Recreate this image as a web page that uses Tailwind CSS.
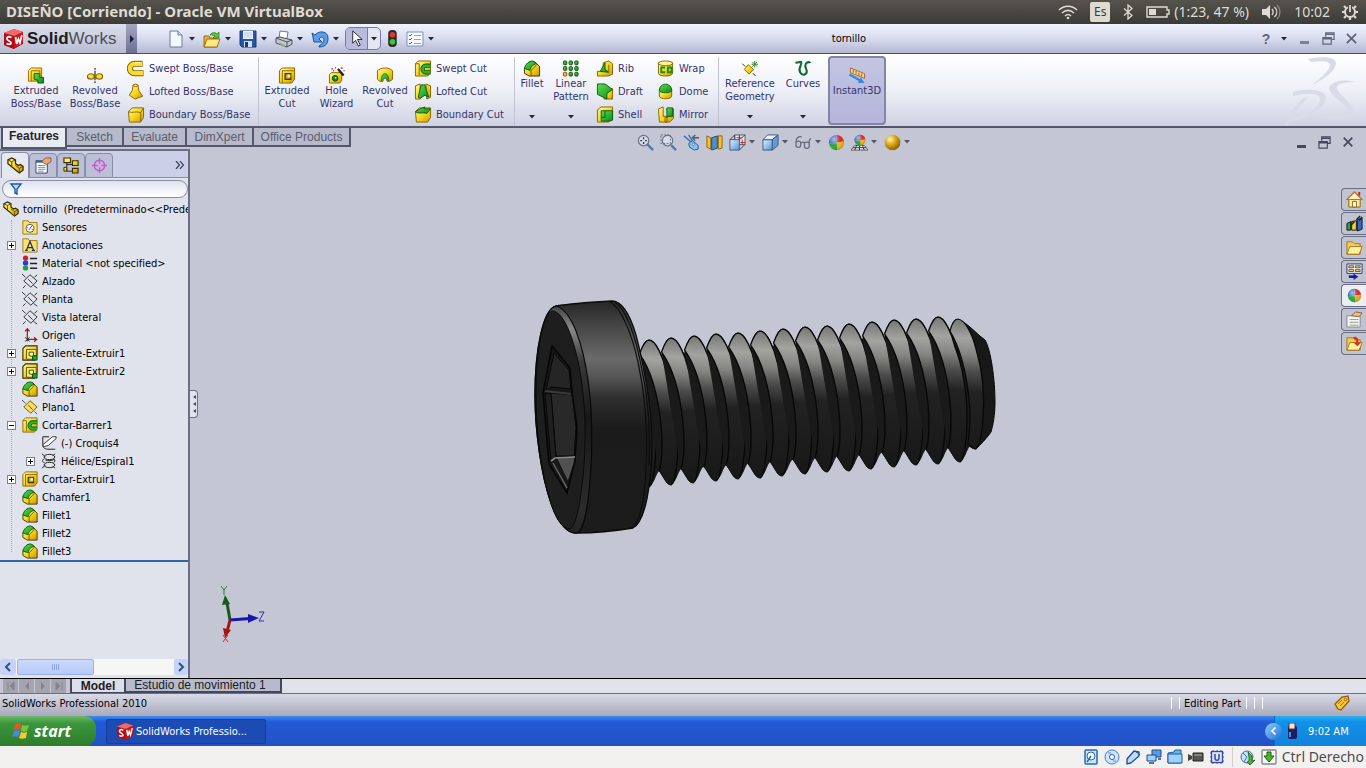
<!DOCTYPE html>
<html lang="es">
<head>
<meta charset="utf-8">
<title>DISEÑO [Corriendo] - Oracle VM VirtualBox</title>
<script src="https://cdn.jsdelivr.net/npm/@tailwindcss/browser@4"></script>
</head>
<body class="flex min-h-screen flex-col overflow-hidden bg-[#c4c7d3] font-['DejaVu_Sans_Condensed','DejaVu_Sans',sans-serif] text-[11px] leading-[13px] text-black">

<svg width="0" height="0" class="absolute" aria-hidden="true">
  <defs>
    <linearGradient id="yel" x1="0" y1="0" x2="1" y2="1"><stop offset="0" stop-color="#fff9a0"/><stop offset=".5" stop-color="#f7d71c"/><stop offset="1" stop-color="#c99700"/></linearGradient>
    <linearGradient id="grn" x1="0" y1="0" x2="1" y2="1"><stop offset="0" stop-color="#5fe04a"/><stop offset="1" stop-color="#0b8a1c"/></linearGradient>
    <linearGradient id="blu" x1="0" y1="0" x2="1" y2="1"><stop offset="0" stop-color="#e2f1fc"/><stop offset="1" stop-color="#4f96d6"/></linearGradient>
    <radialGradient id="gold" cx=".35" cy=".3" r=".8"><stop offset="0" stop-color="#fff8c0"/><stop offset=".4" stop-color="#e0ac1c"/><stop offset="1" stop-color="#7a5200"/></radialGradient>
    <radialGradient id="shine" cx=".35" cy=".3" r=".8"><stop offset="0" stop-color="#fff" stop-opacity=".6"/><stop offset=".5" stop-color="#fff" stop-opacity="0"/><stop offset="1" stop-color="#000" stop-opacity=".3"/></radialGradient>

    <symbol id="dd" viewBox="0 0 6 4"><path d="M0 0h6L3 3.500z" fill="#26263a"/></symbol>
    <symbol id="sw" viewBox="0 0 20 20"><path d="M10 0l9 3v12l-9 5-10-4V4z" fill="#c8141c"/><path d="M0 4l10 3v13L0 16z" fill="#b00d16"/><path d="M10 0l9 3-9 4L0 4z" fill="#f06a6a"/><path d="M7.500 8.500c-3-1.500-5-.5-4.500 1.500s4 2 4 4-3 1.500-4.500.5" fill="none" stroke="#fff" stroke-width="1.800"/><path d="M11.500 8l1.200 7 1.700-5 1.500 4 2-8" fill="none" stroke="#fff" stroke-width="1.700"/></symbol>

    <symbol id="extrude" viewBox="0 0 18 18"><path d="M1 4l3-3h11v10l-3 4H1z" fill="url(#yel)" stroke="#a06c00"/><path d="M4 4h9v9M4 4v11" fill="none" stroke="#a06c00"/><path d="M7 7h6v4h4v6h-6v-3l-4-1z" fill="url(#grn)" stroke="#0a5c12"/></symbol>
    <symbol id="revolve" viewBox="0 0 18 18"><path d="M9 1v2M9 4v10M9 15v2" stroke="#222" stroke-width="1.200"/><ellipse cx="4.500" cy="10" rx="3.500" ry="2.800" fill="#f6dd3a" stroke="#8a6400" stroke-width="1.200"/><ellipse cx="13.500" cy="10" rx="3.500" ry="2.800" fill="#f6dd3a" stroke="#8a6400" stroke-width="1.200"/><path d="M8 10h2" stroke="#8a6400"/></symbol>
    <symbol id="sweep" viewBox="0 0 18 18"><path d="M16 4H7.500a5 5 0 000 10H17" fill="none" stroke="#8a6400" stroke-width="6.500"/><path d="M15.500 4h-8a5 5 0 000 10h9" fill="none" stroke="#f8dc2e" stroke-width="4.500"/><path d="M14 3H8" stroke="#fffbb8"/></symbol>
    <symbol id="loft" viewBox="0 0 18 18"><path d="M6 2h5l1 6 4 6-8 3-6-4 3-5z" fill="url(#yel)" stroke="#8a6400"/><ellipse cx="8.500" cy="2.500" rx="2.500" ry="1.200" fill="#fff9a0" stroke="#8a6400"/></symbol>
    <symbol id="boundary" viewBox="0 0 18 18"><path d="M1 6l4-4h12v10l-3 5H2z" fill="url(#yel)" stroke="#8a6400"/><path d="M1 6c4 2 8-1 13 1l3-5M14 7v9" fill="none" stroke="#8a6400"/></symbol>
    <symbol id="bcut" viewBox="0 0 18 18"><path d="M1 6l4-4h12v10l-3 5H2z" fill="url(#yel)" stroke="#8a6400"/><path d="M1 6l5-3 5-2-1 2h7l-4 5c-4-2-8 1-12-2z" fill="url(#grn)" stroke="#0a5c12"/></symbol>
    <symbol id="excut" viewBox="0 0 18 18"><path d="M1 4l3-3h13v12l-3 4H1z" fill="url(#yel)" stroke="#8a6400"/><path d="M4 4h13M4 4v13" fill="none" stroke="#8a6400"/><path d="M7 7h6v6H7z" fill="#b8a028" stroke="#4a3400" stroke-width="1.300"/><path d="M9.500 8h3v3h-3z" fill="#fff39a"/></symbol>
    <symbol id="hole" viewBox="0 0 18 18"><path d="M1 8l2-2h11v8l-2 3H1z" fill="url(#yel)" stroke="#8a6400"/><circle cx="7" cy="12" r="3" fill="#0f8a20" stroke="#084a10"/><circle cx="7.500" cy="11.500" r="1" fill="#fff39a"/><path d="M10 2l6 7" stroke="#222" stroke-width="2.400"/><path d="M3 2h2M7 1h1M13 1h2M5 4h1M16 4h1" stroke="#c33" stroke-width="1.500"/></symbol>
    <symbol id="revcut" viewBox="0 0 18 18"><path d="M1 4c4-4 12-4 16 0v9c-2 2-4 3-6 2V9H7v6c-2 1-4 0-6-2z" fill="url(#yel)" stroke="#8a6400"/><path d="M5 15c0-4 1-8 4-8s4 4 4 8l-3-3H8z" fill="url(#grn)" stroke="#0a5c12" stroke-width=".7"/></symbol>
    <symbol id="swcut" viewBox="0 0 18 18"><path d="M1 4l3-3h13v12l-3 4H1z" fill="url(#yel)" stroke="#8a6400"/><path d="M1 4h4v12" fill="none" stroke="#8a6400"/><path d="M17 6h-5a3.500 3.500 0 000 7h5" fill="none" stroke="#0a5c12" stroke-width="4.500"/><path d="M17 6h-5a3.500 3.500 0 000 7h5" fill="none" stroke="#27b432" stroke-width="2.600"/></symbol>
    <symbol id="locut" viewBox="0 0 18 18"><path d="M1 3l5-2v16H1zM12 1l5 2v12l-4 2z" fill="url(#yel)" stroke="#8a6400"/><path d="M7 2h4l4 13-4-2-5 3-2-1z" fill="url(#grn)" stroke="#0a5c12"/></symbol>
    <symbol id="fillet" viewBox="0 0 18 18"><path d="M1 9l5-7h6l5 5v10H6l-5-3z" fill="url(#yel)" stroke="#3c2f00"/><path d="M8 17v-6l6-6" fill="none" stroke="#6a5000"/><path d="M1 9c1-5 5-8 9-8l4 3c-4 0-7 4-7 7z" fill="url(#grn)" stroke="#0a5c12"/></symbol>
    <symbol id="pattern" viewBox="0 0 18 18"><g fill="url(#grn)" stroke="#084a10"><rect x="1" y="1" width="3.500" height="4" rx="1"/><rect x="7" y="1" width="3.500" height="4" rx="1"/><rect x="13" y="1" width="3.500" height="4" rx="1"/><rect x="1" y="7" width="3.500" height="4" rx="1"/><rect x="7" y="7" width="3.500" height="4" rx="1"/><rect x="13" y="7" width="3.500" height="4" rx="1"/><rect x="7" y="13" width="3.500" height="4" rx="1"/><rect x="13" y="13" width="3.500" height="4" rx="1"/></g><rect x="1" y="13" width="3.500" height="4" rx="1" fill="#ffb326" stroke="#b03a00"/></symbol>
    <symbol id="rib" viewBox="0 0 18 18"><path d="M1 12h6V3l6-2 4 3v11l-5 2H1z" fill="url(#yel)" stroke="#8a6400"/><path d="M4 12l5-9v7l4 3z" fill="url(#grn)" stroke="#0a5c12"/><path d="M13 5v8" stroke="#8a6400"/></symbol>
    <symbol id="draft" viewBox="0 0 18 18"><path d="M9 6h8v11H8z" fill="url(#yel)" stroke="#8a6400"/><path d="M1 1h8l8 6-6 4v6L1 12z" fill="url(#grn)" stroke="#0a5c12"/></symbol>
    <symbol id="shell" viewBox="0 0 18 18"><path d="M1 4l4-3h12v12l-4 4H1z" fill="url(#yel)" stroke="#8a6400"/><path d="M5 5h12v10l-3 1H5z" fill="url(#grn)" stroke="#0a5c12"/><path d="M9 5v7H5" stroke="#0a5c12" fill="none"/></symbol>
    <symbol id="wrap" viewBox="0 0 18 18"><path d="M1 3v11c0 4 15 4 15 0V3z" fill="url(#yel)" stroke="#8a6400"/><ellipse cx="8.500" cy="3.500" rx="7.500" ry="2.500" fill="#fff39a" stroke="#8a6400"/><path d="M8 8H4v5h4M12 8h3v5h-4V8z" fill="none" stroke="#13911f" stroke-width="2"/></symbol>
    <symbol id="dome" viewBox="0 0 18 18"><path d="M2 7v7c0 3.500 13 3.500 13 0V7z" fill="url(#yel)" stroke="#8a6400"/><path d="M2 8c0-9 13-9 13 0 0 3-13 3-13 0z" fill="url(#grn)" stroke="#0a5c12"/></symbol>
    <symbol id="mirror" viewBox="0 0 18 18"><path d="M1 3l5-2v10h4v6H2z M10 3h7v10l-4 4H8v-5h3z" fill="url(#yel)" stroke="#8a6400"/><path d="M10 2h6v9h-6z" fill="url(#grn)" stroke="#0a5c12"/></symbol>
    <symbol id="refgeo" viewBox="0 0 18 18"><path d="M7 5l6 5-5 5-5-5z" fill="url(#yel)" stroke="#8a6400"/><path d="M1 4l3 3M12 14l3 3" stroke="#222"/><path d="M14 1v7M10.500 4.500h7M11.500 2l5 5M16.500 2l-5 5" stroke="#2d8a2d"/></symbol>
    <symbol id="curves" viewBox="0 0 18 18"><path d="M1 3l6-1c2 3-4 6-1 11 2 4 7 3 7-1 0-3-3-5-1-8s4-1 5-2" fill="none" stroke="#0d6b32" stroke-width="2.200"/></symbol>
    <symbol id="instant" viewBox="0 0 18 18"><path d="M2 1l15 6v5L2 6z" fill="#f7e08a" stroke="#b0603a"/><path d="M5 3v3M8 4v3M11 6v3M14 7v3" stroke="#a04020"/><path d="M1 8l11 6" stroke="#3a86d8" stroke-width="2.500"/><path d="M17 17h-7l3-6z" fill="#3a86d8"/></symbol>
    <symbol id="new" viewBox="0 0 18 18"><path d="M3 1h8l4 4v12H3z" fill="#f4f8ff" stroke="#6a7c98"/><path d="M11 1v4h4" fill="#cfe0f2" stroke="#6a7c98"/></symbol>
    <symbol id="open" viewBox="0 0 18 18"><path d="M1 6h5l1 2h7v9H1z" fill="#e8b53a" stroke="#a06a08"/><path d="M4 9h13l-3 8H1z" fill="#ffe88a" stroke="#a06a08"/><path d="M7 5c2-3 5-3 7-1l2-2v6h-6l2-2c-1-1-3-1-5-1z" fill="#5cc43a" stroke="#2d7a18" stroke-width=".7"/></symbol>
    <symbol id="save" viewBox="0 0 18 18"><path d="M1 1h16v16H3l-2-2z" fill="#2757a8" stroke="#173a7c"/><path d="M4 1h10v8H4z" fill="#f3f7fd"/><path d="M5 3h8M5 5h8M5 7h8" stroke="#b4c4e0"/><path d="M5 11h8v6H5z" fill="#d5dff0"/><path d="M6 12h3v5H6z" fill="#173a7c"/></symbol>
    <symbol id="print" viewBox="0 0 18 18"><path d="M4 8l1-7 8 1-1 7z" fill="#fff" stroke="#778"/><path d="M1 8l4-1 12 3v4l-5 3-11-4z" fill="#c3c6cf" stroke="#4e5260"/><path d="M1 8l11 4 5-2M12 12v5" fill="none" stroke="#4e5260"/><path d="M4 13l6 3" stroke="#86c060" stroke-width="1.500"/></symbol>
    <symbol id="undo" viewBox="0 0 18 18"><path d="M1 3l2 9h8L8 9c2-3 5-2 5 1 0 2-2 4-5 6v1c7 0 9-4 9-9 0-7-9-8-13-3z" fill="#5a9ee8" stroke="#1b4f9c"/></symbol>
    <symbol id="cursor" viewBox="0 0 18 18"><path d="M5 1v13l3-3 3 6 2-1-3-6h5z" fill="#fff" stroke="#223"/></symbol>
    <symbol id="light" viewBox="0 0 18 18"><rect x="5" y="0" width="9" height="18" rx="4" fill="#2a2a2a"/><circle cx="9.500" cy="5" r="3" fill="#e23a2a"/><circle cx="9.500" cy="12.500" r="3" fill="#39c83a"/></symbol>
    <symbol id="options" viewBox="0 0 18 18"><path d="M1 2h16v14H1z" fill="#f6faff" stroke="#7c93b4"/><path d="M3 5l1 1 2-2M3 9l1 1 2-2M3 13l1 1 2-2" fill="none" stroke="#2a7a3a"/><path d="M8 5.500h7M8 9.500h7M8 13.500h7" stroke="#90a4c0"/></symbol>

    <symbol id="zoomfit" viewBox="0 0 18 18"><circle cx="7" cy="7" r="5.500" fill="#d8deec" stroke="#6a7288" stroke-width="1.300"/><path d="M11 11l6 6" stroke="#5078b8" stroke-width="2.500"/><path d="M7 3.500v2M7 8.500v2M3.500 7h2M8.500 7h2" stroke="#333" stroke-width="1.400"/></symbol>
    <symbol id="zoomarea" viewBox="0 0 18 18"><circle cx="8" cy="7" r="5.500" fill="#d8deec" stroke="#6a7288" stroke-width="1.300"/><path d="M12 12l5 5" stroke="#5078b8" stroke-width="2.500"/><path d="M1 1h10v9H1z" fill="none" stroke="#667" stroke-dasharray="2 1.500"/></symbol>
    <symbol id="prevview" viewBox="0 0 18 18"><path d="M1 2l8 7M6 1l5 8" stroke="#3a76b4" stroke-width="1.600"/><path d="M17 4h-6" stroke="#444f70" stroke-width="1.500"/><path d="M13 1l-3 3 3 3" fill="none" stroke="#444f70" stroke-width="1.300"/><path d="M6 10l4-3 6 5v4l-4 1-5-3z" fill="#8cc0ec" stroke="#1f5c9a"/><circle cx="11" cy="11" r="1.300" fill="#fff" stroke="#1f5c9a" stroke-width=".7"/></symbol>
    <symbol id="section" viewBox="0 0 18 18"><path d="M1 2l4 2v12l-4-2z" fill="#f5c330" stroke="#8a6400"/><path d="M6 4l6-2v13l-6 2z" fill="#4d8fd0" stroke="#23487a"/><path d="M13 2h4v13l-4 1z" fill="#f5c330" stroke="#8a6400"/></symbol>
    <symbol id="orient" viewBox="0 0 18 18"><path d="M6 1h11v10H6z" fill="#e4e4ee" stroke="#556"/><path d="M1 6h10v11H1z" fill="url(#blu)" stroke="#3a5a8a"/><path d="M1 6l5-5M11 6l6-5M11 17l6-6M11 1v5M6 1v5" fill="none" stroke="#445"/><path d="M8 4h6M11 2v4M12 9h5M14 6v6" stroke="#b03030"/></symbol>
    <symbol id="display" viewBox="0 0 18 18"><path d="M1 6h10v11H1z" fill="url(#blu)" stroke="#3a5a8a"/><path d="M1 6l5-5h11l-6 5z" fill="#e7f2fb" stroke="#3a5a8a"/><path d="M11 6l6-5v11l-6 5z" fill="#6a98cc" stroke="#3a5a8a"/></symbol>
    <symbol id="glasses" viewBox="0 0 18 18"><path d="M1 9c0-5 3-7 6-6M1 9v3c0 3 5 3 5 0V9c0-2-4-2-5 0M6 10c1-2 4-2 4 0v3c0 3 5 3 5 0v-3c0-2-5-2-5 0M15 10c0-3 0-5 2-5" fill="none" stroke="#62677a" stroke-width="1.300"/></symbol>
    <symbol id="ball" viewBox="0 0 18 18"><path d="M9 9L9 1a8 8 0 018 7z" fill="#d22d2d"/><path d="M9 9l8-1a8 8 0 01-7 9z" fill="#e8b51c"/><path d="M9 9l1 8a8 8 0 01-9-7z" fill="#2aa43c"/><path d="M9 9l-8 1a8 8 0 018-9z" fill="#2f66cc"/><circle cx="9" cy="9" r="8" fill="url(#shine)"/></symbol>
    <symbol id="scene" viewBox="0 0 18 18"><path d="M0 17l4-5h10l4 5z" fill="#eee" stroke="#555"/><path d="M4 17l2-5M9 17v-5M14 17l-2-5M2 14.500h14" stroke="#333"/><use href="#ball" x="3" y="0" width="13" height="13"/></symbol>
    <symbol id="gball" viewBox="0 0 18 18"><circle cx="9" cy="9" r="8.300" fill="url(#gold)"/></symbol>

    <symbol id="part" viewBox="0 0 18 18"><path d="M1 3l4-2 4 2v4l3 2 2-1 3 2v4l-4 3L1 7z" fill="url(#yel)" stroke="#2e2400" stroke-width="1.300"/><path d="M1 3l4 2v5M5 5l4-2M9 9l4 3 4-2M13 12v5" fill="none" stroke="#5c4500"/></symbol>
    <symbol id="prop" viewBox="0 0 18 18"><path d="M1 4h12v13H1z" fill="#fff" stroke="#345"/><path d="M1 4h12v2H1z" fill="#2b62b5"/><path d="M3 9h8M3 11h8M3 13h8M3 15h6" stroke="#6b8cc0"/><path d="M7 5l4-4h6v4l-5 3z" fill="#e6a878" stroke="#7a4a28" stroke-width=".8"/></symbol>
    <symbol id="config" viewBox="0 0 18 18"><path d="M1 1h7v5H1zM10 4h6v5h-6zM10 12h6v5h-6z" fill="url(#yel)" stroke="#3c2f00" stroke-width="1.200"/><path d="M4 6v9h6M4 8h6" stroke="#222" fill="none"/><path d="M1 11h3v4H1z" fill="url(#yel)" stroke="#3c2f00"/></symbol>
    <symbol id="target" viewBox="0 0 18 18"><circle cx="9" cy="9" r="5.500" fill="none" stroke="#c35bc8" stroke-width="1.500"/><path d="M9 1v16M1 9h16" stroke="#c35bc8" stroke-width="1.500"/><circle cx="9" cy="9" r="2" fill="#e8a0ea"/></symbol>
    <symbol id="funnel" viewBox="0 0 14 14"><path d="M2 2h10l-4 5v5l-2-1V7z" fill="#bfe0fa" stroke="#1a56b4" stroke-width="1.400"/></symbol>
    <symbol id="sensor" viewBox="0 0 18 18"><path d="M1 2h6l1 2h9v13H1z" fill="#fde36a" stroke="#9a7408"/><circle cx="9" cy="10.500" r="4.500" fill="#fff" stroke="#456"/><path d="M8 12l3-4M6 10h1M11 12h1" stroke="#225"/></symbol>
    <symbol id="annot" viewBox="0 0 18 18"><path d="M1 2h6l1 2h9v13H1z" fill="#fde36a" stroke="#9a7408"/><path d="M5 15l4-10 4 10M6.500 12h5M3.500 15h3M11 15h3.500" fill="none" stroke="#1d2f7c" stroke-width="1.400"/></symbol>
    <symbol id="material" viewBox="0 0 18 18"><circle cx="4" cy="3.500" r="3" fill="#d02020"/><circle cx="4" cy="9" r="3" fill="#2040d0"/><circle cx="4" cy="14.500" r="3" fill="#20a040"/><path d="M9 4h8M9 9.500h8M9 15h8" stroke="#222" stroke-width="1.600"/></symbol>
    <symbol id="plane" viewBox="0 0 18 18"><path d="M9 2l8 7-7 7-8-7z" fill="none" stroke="#222"/><path d="M0 1l4 4M7 7l5 5M13 14l4 3M1 17l3-3M14 5l3-3" fill="none" stroke="#222"/></symbol>
    <symbol id="yplane" viewBox="0 0 18 18"><path d="M9 2l8 7-7 7-8-7z" fill="#f5dd58" stroke="#6a5000"/><path d="M0 1l4 4M7 7l5 5M14 14l3 3" stroke="#345"/></symbol>
    <symbol id="origin" viewBox="0 0 18 18"><path d="M6 16V3M3.500 5L6 2l2.500 3M6 14h10M13.500 11.500l3 2.500-3 2.500" fill="none" stroke="#9c1c1c" stroke-width="1.400"/><path d="M3.500 11.500l5 5M8.500 11.500l-5 5" stroke="#222"/></symbol>
    <symbol id="saliente" viewBox="0 0 18 18"><path d="M1 4l3-3h13v10l-3 6H1z" fill="url(#yel)" stroke="#3c2f00" stroke-width="1.300"/><path d="M5 5h11v11H5z" fill="#ffe96a" stroke="#5c4500"/><path d="M8 8h5v4l3 1-4 3v-3l-4-1z" fill="#fff7a8" stroke="#0a4a12"/><path d="M12 12h5v5h-5z" fill="#22a032" stroke="#0a4a12"/></symbol>
    <symbol id="sketch" viewBox="0 0 18 18"><path d="M9 2H2v9c0 4 3 5 7 5h7" fill="none" stroke="#222" stroke-width="1.100"/><path d="M2 11L13 2h4v2L8 12l-5 1z" fill="#fff" stroke="#222"/></symbol>
    <symbol id="helix" viewBox="0 0 18 18"><path d="M1 1l4 3M16 1l-3 2M1 17l4-3M16 17l-3-2" stroke="#222"/><g fill="none" stroke="#222" stroke-width="1.100"><ellipse cx="9.500" cy="4.500" rx="6" ry="3"/><ellipse cx="9.500" cy="13.500" rx="6" ry="3"/><path d="M4 6c-3 2-3 4 0 5M15 7c1 1 1 3-1 4M5 8c3 1 7 1 10-1"/></g></symbol>

    <symbol id="home" viewBox="0 0 18 18"><path d="M3 8h12v9H3z" fill="#fbe9a6" stroke="#8a6400"/><path d="M1 9l8-8 8 8z" fill="#fff0b8" stroke="#b0782a" stroke-width="1.300"/><path d="M7 11h4v6H7z" fill="#fff" stroke="#8a6400"/><path d="M13 1h2v4h-2z" fill="#c22"/></symbol>
    <symbol id="library" viewBox="0 0 18 18"><path d="M1 9l4-2v9H1z" fill="#2aa43c" stroke="#111"/><path d="M6 7l5-1v10H6z" fill="#f3d02c" stroke="#111"/><path d="M12 5l5-2v12l-5 2z" fill="#3568c4" stroke="#112"/><path d="M5 11l4-4M11 5l4-4M14 6l3-4" stroke="#222" stroke-width="1.500"/></symbol>
    <symbol id="folder" viewBox="0 0 18 18"><path d="M1 3h6l2 2h6v11H1z" fill="#f6cf52" stroke="#a87410"/><path d="M4 8h13l-3 8H1z" fill="#fff1a4" stroke="#a87410"/></symbol>
    <symbol id="palette" viewBox="0 0 18 18"><path d="M1 1h16v10H1z" fill="#eef" stroke="#335"/><path d="M3 3h5v2H3zM10 3h5v2h-5zM3 7h5v2H3zM10 7h5v2h-5z" fill="#f4e266" stroke="#335" stroke-width=".8"/><path d="M3 13h5v-2l5 3.500L8 18v-2H3z" fill="#1722a8"/></symbol>
    <symbol id="custom" viewBox="0 0 18 18"><path d="M1 5h14v12H1z" fill="#f2f2f2" stroke="#888"/><path d="M4 9h9M4 12h9M4 15h9" stroke="#999"/><path d="M6 5l4-4 7 1-3 4z" fill="#e8c078" stroke="#7a4a28" stroke-width=".8"/></symbol>
    <symbol id="recover" viewBox="0 0 18 18"><use href="#folder"/><path d="M7 3c3-3 7 0 6 5h3l-4 4-4-4h3c0-3-2-4-4-5z" fill="#d8321e"/></symbol>
    <symbol id="restore" viewBox="0 0 14 14"><path d="M4 5V1h9v7h-3M4 2.500h9M1 6h9v7H1zM1 7.500h9" fill="none" stroke="currentColor" stroke-width="1.300"/></symbol>
    <symbol id="close" viewBox="0 0 14 14"><path d="M2 2l10 10M12 2L2 12" stroke="currentColor" stroke-width="2"/></symbol>

    <linearGradient id="head" x1="0" y1="301" x2="0" y2="533" gradientUnits="userSpaceOnUse"><stop offset="0" stop-color="#262626"/><stop offset=".1" stop-color="#444"/><stop offset=".25" stop-color="#6a6a6a"/><stop offset=".33" stop-color="#545454"/><stop offset=".42" stop-color="#2e2e2e"/><stop offset=".55" stop-color="#1b1b1b"/><stop offset="1" stop-color="#1c1c1c"/></linearGradient>
    <linearGradient id="rim" x1="0" y1="301" x2="0" y2="533" gradientUnits="userSpaceOnUse"><stop offset="0" stop-color="#333"/><stop offset=".12" stop-color="#8a8a8a"/><stop offset=".26" stop-color="#3a3a3a"/><stop offset=".5" stop-color="#181818"/><stop offset=".9" stop-color="#2c2c2c"/><stop offset="1" stop-color="#222"/></linearGradient>
    <linearGradient id="crest" x1="0" y1="0" x2="-8" y2="144" gradientUnits="userSpaceOnUse"><stop offset="0" stop-color="#767674"/><stop offset=".13" stop-color="#a3a3a0"/><stop offset=".24" stop-color="#858583"/><stop offset=".36" stop-color="#4c4c4c"/><stop offset=".5" stop-color="#222"/><stop offset="1" stop-color="#181818"/></linearGradient>
    <g id="thread">
      <path d="M0 0C6 0 10 8 14 18L35 90L32 129C29 132 27 143 22 145C17 145 14 135 10 131L-9.500 14C-7 8-5 0 0 0z" fill="#1a1a1a"/>
      <path d="M-9.500 14C-7 7-4 0 0 0C7 0 14 18 17 30C24 48 29 75 29 102C29 122 26 144 22 145C17 145 14 135 10 131C13 122 14 103 12 85C9 55 2 30-9.500 14z" fill="url(#crest)"/>
      <path d="M-9.500 14C-7 7-4 0 0 0C7 0 14 18 17 30C24 48 29 75 29 102C29 122 26 144 22 145M10 131C13 122 14 103 12 85C9 55 2 30-9.500 14" fill="none" stroke="#070708" stroke-width="1.300"/>
      <path d="M22 145C17 145 14 135 10 131" fill="none" stroke="#111" stroke-width="1"/>
    </g>
  </defs>
</svg>

<!-- Host desktop panel -->
<header class="flex h-6 shrink-0 items-center bg-linear-to-b from-[#55534c] to-[#3c3b37] pr-2 pl-1.5 font-['Noto_Sans',sans-serif] text-sm text-[#dfdbd2]">
  <h1 class="flex-1 text-[15px] font-bold">DISEÑO [Corriendo] - Oracle VM VirtualBox</h1>
  <svg class="mr-3 h-4 w-5" viewBox="0 0 20 16"><path d="M1 6c5-5 13-5 18 0M4 9c4-3.500 8-3.500 12 0M7 12c2-2 4-2 6 0" fill="none" stroke="#dfdbd2" stroke-width="1.500"/><circle cx="10" cy="14" r="1.300" fill="#dfdbd2"/></svg>
  <span class="mr-3 flex h-5 w-5 items-center justify-center rounded-xs bg-[#dfdbd2] text-xs text-[#3c3b37]">Es</span>
  <svg class="mr-3 h-4 w-3" viewBox="0 0 12 16"><path d="M2 4.500l8 7L6 15V1l4 3.500-8 7" fill="none" stroke="#dfdbd2" stroke-width="1.300"/></svg>
  <svg class="mr-1 h-3 w-6" viewBox="0 0 24 12"><path d="M1 1h20v3h2v4h-2v3H1z" fill="none" stroke="#dfdbd2" stroke-width="1.400"/><path d="M3 3h7v6H3z" fill="#dfdbd2"/></svg>
  <span class="w-[88px]">(1:23, 47 %)</span>
  <svg class="mr-3 h-4 w-5" viewBox="0 0 20 16"><path d="M0 5h4l4-4v14l-4-4H0z" fill="#dfdbd2"/><path d="M10 5c1.500 2 1.500 4 0 6M12.500 3c3 3 3 7 0 10" fill="none" stroke="#dfdbd2" stroke-width="1.300"/><path d="M15 1c4 4 4 10 0 14" fill="none" stroke="#8c8a83" stroke-width="1.300"/></svg>
  <time class="mr-3">10:02</time>
  <svg class="h-4 w-4" viewBox="0 0 16 16"><circle cx="8" cy="8" r="5" fill="none" stroke="#dfdbd2" stroke-width="2"/><path d="M2 2l2 2M14 2l-2 2M2 14l2-2M14 14l-2-2M0 8h3M13 8h3M8 13v3" stroke="#dfdbd2" stroke-width="2.200"/><path d="M8 0v8" stroke="#45443f" stroke-width="4"/><path d="M8 1v7" stroke="#dfdbd2" stroke-width="1.800"/></svg>
</header>

<!-- Application title bar -->
<div class="flex h-[30px] shrink-0 items-center border-b border-[#4b4e63] bg-linear-to-b from-[#f0f3fd] via-[#d8dcf0] to-[#b4b8d0]">
  <div class="flex h-full w-[126px] items-center gap-[3px] bg-linear-to-b from-[#dcdfec] to-[#b9bdd2] pl-1">
    <svg class="h-5 w-5"><use href="#sw"/></svg>
    <span class="font-['Liberation_Sans',sans-serif] text-[17px] font-bold text-[#1c1c20]">Solid<span class="font-normal text-[#4c4e58]">Works</span></span>
  </div>
  <button class="flex h-full w-[11px] items-center justify-center bg-linear-to-b from-[#a5a7c0] to-[#6d6f92]" aria-label="Menú"><svg class="h-2 w-1" viewBox="0 0 4 8"><path d="M0 0l4 4-4 4z" fill="#1c1c40"/></svg></button>
  <nav class="ml-[30px] flex items-center">
    <button class="flex w-9 items-center gap-1" aria-label="Nuevo"><svg class="h-[18px] w-[18px]"><use href="#new"/></svg><svg class="h-1 w-1.5"><use href="#dd"/></svg></button>
    <button class="flex w-9 items-center gap-1" aria-label="Abrir"><svg class="h-[18px] w-[18px]"><use href="#open"/></svg><svg class="h-1 w-1.5"><use href="#dd"/></svg></button>
    <button class="flex w-9 items-center gap-1" aria-label="Guardar"><svg class="h-[18px] w-[18px]"><use href="#save"/></svg><svg class="h-1 w-1.5"><use href="#dd"/></svg></button>
    <button class="flex w-9 items-center gap-1" aria-label="Imprimir"><svg class="h-[18px] w-[18px]"><use href="#print"/></svg><svg class="h-1 w-1.5"><use href="#dd"/></svg></button>
    <button class="flex w-[34px] items-center gap-1" aria-label="Deshacer"><svg class="h-[18px] w-[18px]"><use href="#undo"/></svg><svg class="h-1 w-1.5"><use href="#dd"/></svg></button>
    <button class="flex h-[23px] w-9 items-center overflow-hidden rounded-[5px] border border-[#7a7c9c] bg-[#e4e6f2]" aria-label="Seleccionar"><span class="flex h-full w-[22px] items-center justify-center border-r border-[#7a7c9c] bg-[#b9bbdc]"><svg class="h-[17px] w-[17px]"><use href="#cursor"/></svg></span><svg class="ml-[3px] h-1 w-1.5"><use href="#dd"/></svg></button>
    <button class="mx-0.5 w-[18px]" aria-label="Reconstruir"><svg class="h-[17px] w-[18px]"><use href="#light"/></svg></button>
    <button class="ml-[3px] flex w-9 items-center gap-1" aria-label="Opciones"><svg class="h-[18px] w-[18px]"><use href="#options"/></svg><svg class="h-1 w-1.5"><use href="#dd"/></svg></button>
  </nav>
  <div class="flex-1 text-center">tornillo</div>
  <div class="flex items-center pr-2 text-[#62667c]">
    <button class="w-5 font-['Liberation_Sans',sans-serif] text-sm font-bold" aria-label="Ayuda">?</button>
    <button class="mr-2 w-4" aria-label="Más ayuda"><svg class="mx-auto h-1 w-1.5"><use href="#dd"/></svg></button>
    <button class="mr-3 h-3 w-2.5" aria-label="Minimizar"><span class="mt-2 block h-[3px] w-[9px] bg-[#7c8098]"></span></button>
    <button class="mr-2.5" aria-label="Restaurar"><svg class="h-[13px] w-[13px]"><use href="#restore"/></svg></button>
    <button aria-label="Cerrar"><svg class="h-[13px] w-[13px]"><use href="#close"/></svg></button>
  </div>
</div>

<!-- Command manager -->
<div class="flex h-[74px] shrink-0 border-b-2 border-[#535769] bg-linear-to-b from-white via-[#eef0f7] to-[#cfd2e2] pl-[7px] text-[#34346c]">
  <button class="flex w-[58px] flex-col items-center pt-[13px]"><svg class="h-[17px] w-[18px]"><use href="#extrude"/></svg><span>Extruded<br>Boss/Base</span></button>
  <button class="flex w-[60px] flex-col items-center pt-[13px]"><svg class="h-[17px] w-[18px]"><use href="#revolve"/></svg><span>Revolved<br>Boss/Base</span></button>
  <div class="mt-[3px] flex w-[134px] flex-col border-r border-[#c0c3d2] pl-0.5">
    <button class="flex h-[23px] items-center gap-1"><svg class="h-[17px] w-[18px]"><use href="#sweep"/></svg>Swept Boss/Base</button>
    <button class="flex h-[23px] items-center gap-1"><svg class="h-[17px] w-[18px]"><use href="#loft"/></svg>Lofted Boss/Base</button>
    <button class="flex h-[23px] items-center gap-1 whitespace-nowrap"><svg class="h-[17px] w-[18px]"><use href="#boundary"/></svg>Boundary Boss/Base</button>
  </div>
  <button class="flex w-14 flex-col items-center pt-[13px]"><svg class="h-[17px] w-[18px]"><use href="#excut"/></svg><span>Extruded<br>Cut</span></button>
  <button class="flex w-[43px] flex-col items-center pt-[13px]"><svg class="h-[17px] w-[18px]"><use href="#hole"/></svg><span>Hole<br>Wizard</span></button>
  <button class="flex w-[54px] flex-col items-center pt-[13px]"><svg class="h-[17px] w-[18px]"><use href="#revcut"/></svg><span>Revolved<br>Cut</span></button>
  <div class="mt-[3px] flex w-[103px] flex-col border-r border-[#c0c3d2] pl-0.5">
    <button class="flex h-[23px] items-center gap-1"><svg class="h-[17px] w-[18px]"><use href="#swcut"/></svg>Swept Cut</button>
    <button class="flex h-[23px] items-center gap-1"><svg class="h-[17px] w-[18px]"><use href="#locut"/></svg>Lofted Cut</button>
    <button class="flex h-[23px] items-center gap-1 whitespace-nowrap"><svg class="h-[17px] w-[18px]"><use href="#bcut"/></svg>Boundary Cut</button>
  </div>
  <button class="flex w-[34px] flex-col items-center pt-1.5 pb-[7px]"><svg class="h-[17px] w-[18px]"><use href="#fillet"/></svg><span>Fillet</span><svg class="mt-auto h-1 w-1.5"><use href="#dd"/></svg></button>
  <button class="flex w-11 flex-col items-center pt-1.5 pb-[7px]"><svg class="h-[17px] w-[18px]"><use href="#pattern"/></svg><span>Linear<br>Pattern</span><svg class="mt-auto h-1 w-1.5"><use href="#dd"/></svg></button>
  <div class="mt-[3px] flex w-[62px] flex-col pl-[3px]">
    <button class="flex h-[23px] items-center gap-1"><svg class="h-[17px] w-[18px]"><use href="#rib"/></svg>Rib</button>
    <button class="flex h-[23px] items-center gap-1"><svg class="h-[17px] w-[18px]"><use href="#draft"/></svg>Draft</button>
    <button class="flex h-[23px] items-center gap-1"><svg class="h-[17px] w-[18px]"><use href="#shell"/></svg>Shell</button>
  </div>
  <div class="mt-[3px] flex w-16 flex-col border-r border-[#c0c3d2] pl-0.5">
    <button class="flex h-[23px] items-center gap-1"><svg class="h-[17px] w-[18px]"><use href="#wrap"/></svg>Wrap</button>
    <button class="flex h-[23px] items-center gap-1"><svg class="h-[17px] w-[18px]"><use href="#dome"/></svg>Dome</button>
    <button class="flex h-[23px] items-center gap-1"><svg class="h-[17px] w-[18px]"><use href="#mirror"/></svg>Mirror</button>
  </div>
  <button class="flex w-[62px] flex-col items-center pt-1.5 pb-[7px]"><svg class="h-[17px] w-[18px]"><use href="#refgeo"/></svg><span>Reference<br>Geometry</span><svg class="mt-auto h-1 w-1.5"><use href="#dd"/></svg></button>
  <button class="flex w-11 flex-col items-center pt-1.5 pb-[7px]"><svg class="h-[17px] w-[18px]"><use href="#curves"/></svg><span>Curves</span><svg class="mt-auto h-1 w-1.5"><use href="#dd"/></svg></button>
  <button class="mt-0.5 mb-px ml-[3px] flex w-[58px] flex-col items-center rounded-sm border-2 border-[#8385a3] bg-linear-to-b from-[#c3c5e2] to-[#b4b5da] pt-[9px]" aria-pressed="true"><svg class="h-[17px] w-[18px]"><use href="#instant"/></svg><span>Instant3D</span></button>
  <svg class="mt-0.5 mr-1 ml-auto h-[70px] w-[76px]" viewBox="0 0 76 70"><g fill="#d9dbe8"><path d="M22 3C34 0 51 0 50 8C48 17 36 24 26 29C35 22 44 14 44 9C43 4 34 5 25 6z"/><path d="M7 36C20 32 40 33 40 42C39 54 20 65 4 65C2 67 1 69 0 70C3 58 9 50 17 42L22 42C16 47 11 54 7 61C20 60 34 52 34 43C34 36 18 38 7 40z"/><path d="M70 26C56 22 44 26 43 32C43 39 60 48 61 53C61 60 44 60 32 58C38 63 50 65 60 62C70 59 68 52 62 46C56 39 49 34 51 30C54 27 61 26 70 26z"/></g></svg>
</div>

<!-- Work area -->
<main class="flex flex-1 flex-col">
  <div class="flex h-[21px] items-start">
    <div role="tablist" class="flex font-['Liberation_Sans',sans-serif] text-xs text-[#5a5d6c]">
      <button role="tab" aria-selected="true" class="ml-px h-[21px] w-[66px] border-x-2 border-b-2 border-[#535769] bg-[#e9ebf3] pb-1 font-bold text-[#26262e]">Features</button>
      <button role="tab" class="h-[19px] w-[57px] border-r-2 border-b-2 border-[#535769] bg-[#b7bacb]">Sketch</button>
      <button role="tab" class="h-[19px] w-[63px] border-r-2 border-b-2 border-[#535769] bg-[#b7bacb]">Evaluate</button>
      <button role="tab" class="h-[19px] w-[67px] border-r-2 border-b-2 border-[#535769] bg-[#b7bacb]">DimXpert</button>
      <button role="tab" class="h-[19px] w-[97px] border-r-2 border-b-2 border-[#535769] bg-[#b7bacb]">Office Products</button>
    </div>
    <div class="mt-[5px] ml-[286px] flex h-[18px] flex-1 items-center">
      <button aria-label="Zoom para ajustar" class="mr-1.5"><svg class="h-[17px] w-[17px]"><use href="#zoomfit"/></svg></button>
      <button aria-label="Zoom encuadre" class="mr-1.5"><svg class="h-[17px] w-[17px]"><use href="#zoomarea"/></svg></button>
      <button aria-label="Vista previa" class="mr-1.5"><svg class="h-[17px] w-[17px]"><use href="#prevview"/></svg></button>
      <button aria-label="Vista de sección" class="mr-1.5"><svg class="h-[17px] w-[17px]"><use href="#section"/></svg></button>
      <button aria-label="Orientación" class="flex w-[33px] items-center gap-[3px]"><svg class="h-[17px] w-[17px]"><use href="#orient"/></svg><svg class="h-1 w-1.5 opacity-70"><use href="#dd"/></svg></button>
      <button aria-label="Visualización" class="flex w-[33px] items-center gap-[3px]"><svg class="h-[17px] w-[17px]"><use href="#display"/></svg><svg class="h-1 w-1.5 opacity-70"><use href="#dd"/></svg></button>
      <button aria-label="Ocultar" class="flex w-[33px] items-center gap-[3px]"><svg class="h-[17px] w-[17px]"><use href="#glasses"/></svg><svg class="h-1 w-1.5 opacity-70"><use href="#dd"/></svg></button>
      <button aria-label="Apariencia" class="mr-1.5"><svg class="h-[17px] w-[17px]"><use href="#ball"/></svg></button>
      <button aria-label="Escena" class="flex w-[33px] items-center gap-[3px]"><svg class="h-[17px] w-[17px]"><use href="#scene"/></svg><svg class="h-1 w-1.5 opacity-70"><use href="#dd"/></svg></button>
      <button aria-label="Vista" class="flex items-center gap-[3px]"><svg class="h-[17px] w-[17px]"><use href="#gball"/></svg><svg class="h-1 w-1.5 opacity-70"><use href="#dd"/></svg></button>
      <div class="mr-3 ml-auto flex items-center gap-[11px] text-[#44485c]">
        <button class="h-3 w-2.5" aria-label="Minimizar documento"><span class="mt-2 block h-[3px] w-[9px] bg-[#44485c]"></span></button>
        <button aria-label="Restaurar documento"><svg class="h-[13px] w-[13px]"><use href="#restore"/></svg></button>
        <button aria-label="Cerrar documento"><svg class="h-3 w-3"><use href="#close"/></svg></button>
      </div>
    </div>
  </div>

  <div class="flex flex-1">
    <!-- Feature manager -->
    <aside class="flex w-[190px] shrink-0 flex-col border-r-2 border-[#6b6f84] bg-[#e0e3ec]">
      <div class="flex h-[29px] items-end border-t-2 border-[#6b6f84] bg-[#cbd0e8]">
        <button class="ml-px flex h-[26px] w-7 items-center justify-center rounded-t-sm border-x border-t border-[#8a8da5] bg-[#e6e8f1]" aria-label="Árbol de operaciones"><svg class="h-[17px] w-[17px]"><use href="#part"/></svg></button>
        <button class="flex h-[25px] w-7 items-center justify-center rounded-t-sm border-x border-t border-b border-[#8a8da5] bg-[#bcc0d6]" aria-label="Propiedades"><svg class="h-[17px] w-[17px]"><use href="#prop"/></svg></button>
        <button class="flex h-[25px] w-7 items-center justify-center rounded-t-sm border-x border-t border-b border-[#8a8da5] bg-[#bcc0d6]" aria-label="Configuraciones"><svg class="h-[17px] w-[17px]"><use href="#config"/></svg></button>
        <button class="flex h-[25px] w-7 items-center justify-center rounded-t-sm border-x border-t border-b border-[#8a8da5] bg-[#bcc0d6]" aria-label="DimXpert"><svg class="h-[17px] w-[17px]"><use href="#target"/></svg></button>
        <button class="flex h-[25px] flex-1 items-center justify-end border-b border-[#8a8da5] pr-1" aria-label="Expandir"><svg class="h-2 w-[9px]" viewBox="0 0 9 8"><path d="M1 0l3.500 4L1 8M5 0l3.500 4L5 8" fill="none" stroke="#3c4058" stroke-width="1.200"/></svg></button>
      </div>
      <label class="mt-0.5 ml-0.5 flex h-[18px] items-center rounded-full border border-[#8a8da5] bg-linear-to-b from-[#dfe2ee] to-white pl-1.5"><svg class="h-3.5 w-3.5 shrink-0"><use href="#funnel"/></svg><input type="text" class="w-full bg-transparent outline-none" aria-label="Filtro"></label>

      <ul class="relative mt-0.5 overflow-hidden border-b-2 border-[#3265a8] whitespace-nowrap before:absolute before:top-5 before:bottom-2 before:left-[11px] before:border-l before:border-dotted before:border-[#a4a8b4]">
        <li class="flex h-[18px] items-center gap-1 pl-[3px]"><svg class="h-4 w-4 shrink-0"><use href="#part"/></svg>tornillo&nbsp; (Predeterminado&lt;&lt;Prede</li>
        <li class="flex h-[18px] items-center gap-1 pl-[22px]"><svg class="h-4 w-4"><use href="#sensor"/></svg>Sensores</li>
        <li class="flex h-[18px] items-center gap-1 pl-[7px]"><button class="relative mr-[3px] h-[9px] w-[9px] border border-[#7b8090] bg-white before:absolute before:top-[3px] before:left-px before:h-px before:w-[5px] before:bg-black after:absolute after:top-px after:left-[3px] after:h-[5px] after:w-px after:bg-black" aria-label="Expandir Anotaciones"></button><svg class="-ml-px h-4 w-4"><use href="#annot"/></svg>Anotaciones</li>
        <li class="flex h-[18px] items-center gap-1 pl-[22px]"><svg class="h-4 w-4"><use href="#material"/></svg>Material &lt;not specified&gt;</li>
        <li class="flex h-[18px] items-center gap-1 pl-[22px]"><svg class="h-4 w-4"><use href="#plane"/></svg>Alzado</li>
        <li class="flex h-[18px] items-center gap-1 pl-[22px]"><svg class="h-4 w-4"><use href="#plane"/></svg>Planta</li>
        <li class="flex h-[18px] items-center gap-1 pl-[22px]"><svg class="h-4 w-4"><use href="#plane"/></svg>Vista lateral</li>
        <li class="flex h-[18px] items-center gap-1 pl-[22px]"><svg class="h-4 w-4"><use href="#origin"/></svg>Origen</li>
        <li class="flex h-[18px] items-center gap-1 pl-[7px]"><button class="relative mr-[3px] h-[9px] w-[9px] border border-[#7b8090] bg-white before:absolute before:top-[3px] before:left-px before:h-px before:w-[5px] before:bg-black after:absolute after:top-px after:left-[3px] after:h-[5px] after:w-px after:bg-black" aria-label="Expandir Saliente-Extruir1"></button><svg class="-ml-px h-4 w-4"><use href="#saliente"/></svg>Saliente-Extruir1</li>
        <li class="flex h-[18px] items-center gap-1 pl-[7px]"><button class="relative mr-[3px] h-[9px] w-[9px] border border-[#7b8090] bg-white before:absolute before:top-[3px] before:left-px before:h-px before:w-[5px] before:bg-black after:absolute after:top-px after:left-[3px] after:h-[5px] after:w-px after:bg-black" aria-label="Expandir Saliente-Extruir2"></button><svg class="-ml-px h-4 w-4"><use href="#saliente"/></svg>Saliente-Extruir2</li>
        <li class="flex h-[18px] items-center gap-1 pl-[22px]"><svg class="h-4 w-4"><use href="#fillet"/></svg>Chaflán1</li>
        <li class="flex h-[18px] items-center gap-1 pl-[22px]"><svg class="h-4 w-4"><use href="#yplane"/></svg>Plano1</li>
        <li class="flex h-[18px] items-center gap-1 pl-[7px]"><button class="relative mr-[3px] h-[9px] w-[9px] border border-[#7b8090] bg-white before:absolute before:top-[3px] before:left-px before:h-px before:w-[5px] before:bg-black" aria-label="Contraer Cortar-Barrer1"></button><svg class="-ml-px h-4 w-4"><use href="#swcut"/></svg>Cortar-Barrer1</li>
        <li class="flex h-[18px] items-center gap-1 pl-[41px]"><svg class="h-4 w-4"><use href="#sketch"/></svg>(-) Croquis4</li>
        <li class="flex h-[18px] items-center gap-1 pl-[26px]"><button class="relative mr-[3px] h-[9px] w-[9px] border border-[#7b8090] bg-white before:absolute before:top-[3px] before:left-px before:h-px before:w-[5px] before:bg-black after:absolute after:top-px after:left-[3px] after:h-[5px] after:w-px after:bg-black" aria-label="Expandir Hélice/Espiral1"></button><svg class="-ml-px h-4 w-4"><use href="#helix"/></svg>Hélice/Espiral1</li>
        <li class="flex h-[18px] items-center gap-1 pl-[7px]"><button class="relative mr-[3px] h-[9px] w-[9px] border border-[#7b8090] bg-white before:absolute before:top-[3px] before:left-px before:h-px before:w-[5px] before:bg-black after:absolute after:top-px after:left-[3px] after:h-[5px] after:w-px after:bg-black" aria-label="Expandir Cortar-Extruir1"></button><svg class="-ml-px h-4 w-4"><use href="#excut"/></svg>Cortar-Extruir1</li>
        <li class="flex h-[18px] items-center gap-1 pl-[22px]"><svg class="h-4 w-4"><use href="#fillet"/></svg>Chamfer1</li>
        <li class="flex h-[18px] items-center gap-1 pl-[22px]"><svg class="h-4 w-4"><use href="#fillet"/></svg>Fillet1</li>
        <li class="flex h-[18px] items-center gap-1 pl-[22px]"><svg class="h-4 w-4"><use href="#fillet"/></svg>Fillet2</li>
        <li class="flex h-[18px] items-center gap-1 pl-[22px]"><svg class="h-4 w-4"><use href="#fillet"/></svg>Fillet3</li>
      </ul>

      <div class="mt-auto mb-[3px] flex h-4 items-stretch bg-[#f6f6f4]">
        <button class="flex w-4 items-center justify-center rounded-xs bg-[#c5d3f8]" aria-label="Izquierda"><svg class="h-2.5 w-2" viewBox="0 0 8 10"><path d="M6 1L2 5l4 4" fill="none" stroke="#35507c" stroke-width="2"/></svg></button>
        <div class="ml-px flex w-[77px] items-center justify-center gap-px rounded-xs border border-[#98b2ea] bg-linear-to-b from-[#cbd9fc] to-[#b6caf8]"><i class="h-1.5 w-px bg-[#8ca6e0]"></i><i class="h-1.5 w-px bg-[#8ca6e0]"></i><i class="h-1.5 w-px bg-[#8ca6e0]"></i><i class="h-1.5 w-px bg-[#8ca6e0]"></i></div>
        <button class="ml-auto flex w-3.5 items-center justify-center rounded-xs bg-[#c5d3f8]" aria-label="Derecha"><svg class="h-2.5 w-2" viewBox="0 0 8 10"><path d="M2 1l4 4-4 4" fill="none" stroke="#35507c" stroke-width="2"/></svg></button>
      </div>
    </aside>

    <!-- Graphics area -->
    <section class="relative flex-1 overflow-hidden" aria-label="Área de gráficos">
      <button class="absolute top-[241px] left-0 flex h-7 w-2 flex-col items-center justify-center gap-1 rounded-r-sm border border-l-0 border-[#6b6f84] bg-[#e0e3ec]" aria-label="Ocultar panel"><svg class="h-[18px] w-1" viewBox="0 0 4 18"><path d="M4 0v4L1 2zM4 7v4L1 9zM4 14v4l-3-2z" fill="#44485c"/></svg></button>

      <svg class="absolute top-[149px] left-[340px] h-60 w-[470px]" viewBox="530 298 470 240" role="img" aria-label="Tornillo">
        <path d="M640 356L960 331L985 345L985 440L965 446L655 471L645 471z" fill="#1a1a1a"/>
        <path d="M627 342C635 350 647 380 652 420C656 455 654 475 651 485L640 490z" fill="#1a1a1a" stroke="#080808"/>
        <path d="M955 320C966 320 974 332 985 340C991 350 995 380 995 402C995 415 993 425 991 432C987 438 980 445 976 449C972 449 971 446 966 445z" fill="#181818" stroke="#060606"/>
        <use href="#thread" x="627" y="342"/>
        <use href="#thread" x="649" y="340"/>
        <use href="#thread" x="671" y="338"/>
        <use href="#thread" x="694" y="336"/>
        <use href="#thread" x="716" y="334"/>
        <use href="#thread" x="738" y="333"/>
        <use href="#thread" x="760" y="331"/>
        <use href="#thread" x="783" y="329"/>
        <use href="#thread" x="805" y="327"/>
        <use href="#thread" x="827" y="326"/>
        <use href="#thread" x="849" y="324"/>
        <use href="#thread" x="872" y="322"/>
        <use href="#thread" x="894" y="320"/>
        <use href="#thread" x="916" y="319"/>
        <use href="#thread" x="938" y="317"/>
        <g transform="translate(958 319)"><path d="M-8 12C-6 4-3 0 0 0C7 1 14 14 18 30C24 50 27 75 25 100C24 116 22 125 18 130C14 130 12 126 10 125C12 110 13 95 11 80C8 50 1 27-8 12z" fill="url(#crest)" stroke="#070708" stroke-width="1.200"/></g>
        <path d="M556 306C575 303 595 302 612 301C622 301 630 315 636 335C644 365 652 410 652 440C652 485 645 522 633 528C615 531 595 533 577 533C566 534 558 522 551 503C541 475 535 430 535 395C535 350 543 309 556 306z" fill="url(#head)" stroke="#0b0b0b" stroke-width="1.300"/>
        <path d="M610 302C622 308 632 335 638 362C645 395 648 430 646 465C645 500 640 520 633 527M615 302C628 312 637 343 642 370C649 405 650 430 649 465" fill="none" stroke="#0d0d0d" stroke-width="1.200"/>
        <path d="M556 306C572 310 583 345 588 380C593 415 593 460 588 500C585 522 582 531 577 533C566 534 558 522 551 503C541 475 535 430 535 395C535 350 543 309 556 306z" fill="url(#rim)" stroke="#080808" stroke-width="1.200"/>
        <path d="M552 311C565 311 576 345 581 378C587 415 586 460 581 493C578 515 574 528 569 529C560 527 554 515 549 497C541 470 536 430 536 395C536 350 543 314 552 311z" fill="#1e1e1e" stroke="#0a0a0a"/>
        <path d="M552 346L570 368L572 392L577 427L575 461L567 493L549 464L543 393z" fill="#181818" stroke="#050505" stroke-width="1.500"/>
        <path d="M554 353L569 370L571 389L551 387L546 391z" fill="#252525" stroke="#070707"/>
        <path d="M551 393L572 395L576 427L574 456L556 456z" fill="#292929" stroke="#090909"/>
        <path d="M545 393L551 394L556 457L551 461z" fill="#202020" stroke="#070707"/>
        <path d="M545 391l26 3" stroke="#3a3a3a" stroke-width="2"/>
        <path d="M556 457L575 456L574 463L568 482z" fill="#515151" stroke="#111"/>
        <path d="M551 461L555 458L575 457" fill="none" stroke="#888" stroke-width="1.600"/>
        <path d="M553 463L567 488" stroke="#666" stroke-width="1.500"/>
      </svg>

      <svg class="absolute top-[435px] left-[25px] h-[60px] w-[54px]" viewBox="215 584 54 60" aria-hidden="true"><path d="M230 620l-3-17" stroke="#175a1c" stroke-width="3"/><path d="M225 595l5 9-8 1z" fill="#175a1c"/><path d="M230 620l20-1.500" stroke="#1717a8" stroke-width="3"/><path d="M259 618l-11-4v9z" fill="#1717a8"/><path d="M230 620l-3 12" stroke="#a31414" stroke-width="3"/><path d="M225 638l-2-10 8 2z" fill="#a31414"/><path d="M221 586l3 4 3-4M224 590v5" fill="none" stroke="#2c7a30"/><path d="M259 612h5l-5 9h5" fill="none" stroke="#2a2ab8"/><path d="M223 635l5 7M228 635l-5 7" stroke="#d22"/></svg>

      <nav class="mt-[39px] ml-auto flex w-[25px] flex-col gap-px" aria-label="Panel de tareas">
        <button class="flex h-[23px] items-center justify-center rounded-l-sm border border-r-0 border-[#6b6f84] bg-[#c0c3d2]" aria-label="Inicio"><svg class="h-[17px] w-[17px]"><use href="#home"/></svg></button>
        <button class="flex h-[23px] items-center justify-center rounded-l-sm border border-r-0 border-[#6b6f84] bg-[#c0c3d2]" aria-label="Biblioteca"><svg class="h-[17px] w-[17px]"><use href="#library"/></svg></button>
        <button class="flex h-[23px] items-center justify-center rounded-l-sm border border-r-0 border-[#6b6f84] bg-[#c0c3d2]" aria-label="Explorador"><svg class="h-[17px] w-[17px]"><use href="#folder"/></svg></button>
        <button class="flex h-[23px] items-center justify-center rounded-l-sm border border-r-0 border-[#6b6f84] bg-[#c0c3d2]" aria-label="Paleta"><svg class="h-[17px] w-[17px]"><use href="#palette"/></svg></button>
        <button class="flex h-[23px] items-center justify-center rounded-l-sm border border-r-0 border-[#6b6f84] bg-[#eceef4]" aria-label="Apariencias"><svg class="h-[15px] w-[15px]"><use href="#ball"/></svg></button>
        <button class="flex h-[23px] items-center justify-center rounded-l-sm border border-r-0 border-[#6b6f84] bg-[#c0c3d2]" aria-label="Propiedades personalizadas"><svg class="h-[17px] w-[17px]"><use href="#custom"/></svg></button>
        <button class="flex h-[23px] items-center justify-center rounded-l-sm border border-r-0 border-[#6b6f84] bg-[#c0c3d2]" aria-label="Recuperar"><svg class="h-[17px] w-[17px]"><use href="#recover"/></svg></button>
      </nav>
    </section>
  </div>
</main>

<!-- Model and motion study tabs -->
<div class="flex h-[15px] shrink-0 border-t border-black bg-[#e0e3ec] font-['Liberation_Sans',sans-serif] text-xs leading-3 text-[#1c1c26]">
  <div class="flex w-[70px] gap-px bg-[#c4c7d3] pl-[3px]">
    <button class="flex w-[15px] items-center justify-center bg-[#a3a4ad]" aria-label="Primero"><svg class="h-2 w-2" viewBox="0 0 8 8"><path d="M1 0v8M7 0v8L3 4z" stroke="#83848e" fill="#83848e"/></svg></button>
    <button class="flex w-[15px] items-center justify-center bg-[#a3a4ad]" aria-label="Anterior"><svg class="h-2 w-2" viewBox="0 0 8 8"><path d="M6 0v8L2 4z" fill="#83848e"/></svg></button>
    <button class="flex w-[15px] items-center justify-center bg-[#a3a4ad]" aria-label="Siguiente"><svg class="h-2 w-2" viewBox="0 0 8 8"><path d="M2 0v8l4-4z" fill="#83848e"/></svg></button>
    <button class="flex w-[15px] items-center justify-center bg-[#a3a4ad]" aria-label="Último"><svg class="h-2 w-2" viewBox="0 0 8 8"><path d="M7 0v8M1 0v8l4-4z" stroke="#83848e" fill="#83848e"/></svg></button>
  </div>
  <button class="w-[54px] border-b border-l-2 border-[#44485c] bg-[#dcdfea] font-bold">Model</button>
  <button class="w-[158px] border-x-2 border-b-2 border-[#44485c] bg-[#b7bacb] pr-1.5">Estudio de movimiento 1</button>
</div>

<!-- Application status bar -->
<footer class="flex h-[23px] shrink-0 items-center border-t border-[#6b6f84] bg-linear-to-b from-[#d8dae6] to-[#a8aabd] pl-0.5">
  <span class="flex-1 pb-1">SolidWorks Professional 2010</span>
  <span class="flex h-full items-center gap-[7px] pb-1"><i class="h-3 w-px bg-white"></i><i class="h-3 w-px bg-white"></i></span>
  <span class="w-[66px] pb-1 pl-1">Editing Part</span>
  <span class="flex h-full w-[88px] items-center gap-[7px] pb-1"><i class="h-3 w-px bg-white"></i><i class="h-3 w-px bg-white"></i><i class="h-3 w-px bg-white"></i></span>
  <svg class="mr-4 mb-1 h-4 w-4" viewBox="0 0 16 16"><path d="M1 9l7-7 6-1 1 5-8 9-3-1z" fill="#f9c635" stroke="#9a5c08" stroke-width="1.300"/><circle cx="11.500" cy="4.500" r="1.300" fill="#fff" stroke="#9a5c08"/><path d="M4 9l4-4M6 11l4-4" stroke="#a86a10"/></svg>
</footer>

<!-- Guest taskbar -->
<nav class="flex h-[30px] shrink-0 items-center bg-linear-to-b from-[#3f8cf0] via-[#2459d8] via-20% to-[#2252c4] text-white">
  <button class="flex h-full w-24 items-center gap-1 rounded-r-xl bg-linear-to-b from-[#6cb86a] via-[#3b963b] via-25% to-[#2e7c2c] pl-3">
    <svg class="h-[18px] w-[18px]" viewBox="0 0 18 18"><path d="M3 2c2-1 4-1 6 0L8 8c-2-1-4-1-6 0z" fill="#e8542a"/><path d="M10 3c2 1 4 1 7 0l-2 6c-2 1-4 1-6 0z" fill="#7cc53a"/><path d="M2 9c2-1 4-1 6 0l-2 6c-2-1-4-1-6 0z" fill="#4a86e8"/><path d="M9 10c2 1 4 1 6 0l-1 6c-2 1-5 1-7 0z" fill="#f6cc2c"/></svg>
    <span class="font-['Open_Sans',sans-serif] text-base font-bold italic leading-5">start</span>
  </button>
  <button class="ml-2.5 flex h-[25px] w-40 items-center gap-0.5 rounded-xs border border-[#153f9c] bg-[#1c4bb4] pl-2.5"><svg class="h-[17px] w-[17px]"><use href="#sw"/></svg>SolidWorks Professio...</button>
  <div class="ml-auto flex h-full w-[92px] items-center border-l border-[#0f6cc4] bg-linear-to-b from-[#2cb0f4] via-[#1290e8] via-20% to-[#1184dc]">
    <button class="-ml-2.5 flex h-[17px] w-[17px] items-center justify-center rounded-full bg-linear-to-br from-[#8cd0fa] to-[#1a6cd8]" aria-label="Mostrar iconos"><svg class="h-2 w-2" viewBox="0 0 8 8"><path d="M5.500 0.500L2 4l3.500 3.500" fill="none" stroke="#fff" stroke-width="1.700"/></svg></button>
    <svg class="ml-1 h-4 w-3" viewBox="0 0 12 16"><rect x="2" y="3" width="9" height="13" rx="2" fill="#15206c"/><path d="M3 0h6v6H3z" fill="#f0e8d0" stroke="#7a2a2a"/><path d="M4 9v5" stroke="#8ac" stroke-width="1.500"/></svg>
    <time class="ml-2.5">9:02 AM</time>
  </div>
</nav>

<!-- Virtual machine status bar -->
<footer class="flex h-[22px] shrink-0 items-center bg-[#f2f1f0] pr-0.5 font-['Noto_Sans',sans-serif] text-sm text-[#4c4c4c]">
  <div class="ml-auto flex items-center gap-[5px]">
    <svg class="h-4 w-4" viewBox="0 0 16 16"><rect x="2" y="1" width="12" height="14" rx="1" fill="#cfe4f8" stroke="#2868b0" stroke-width="1.500"/><circle cx="8" cy="7" r="4" fill="#fff" stroke="#2868b0"/><path d="M4 13l4-6" stroke="#2868b0" stroke-width="1.500"/></svg>
    <svg class="h-4 w-4" viewBox="0 0 16 16"><circle cx="8" cy="8" r="7" fill="#cfe4f8" stroke="#4884c4"/><path d="M8 8L3 3h4zM8 8l5 5H9z" fill="#8cbcec"/><circle cx="8" cy="8" r="2.500" fill="#fff" stroke="#2868b0"/></svg>
    <svg class="h-4 w-4" viewBox="0 0 16 16"><path d="M2 10l7-8 5 1v4l-8 7-4 1z" fill="#bcdcf8" stroke="#1a4c90" stroke-width="1.300"/><path d="M10 2l5 4" stroke="#1a4c90"/></svg>
    <svg class="h-4 w-4" viewBox="0 0 16 16"><path d="M6 1h9v7H6z" fill="#5a9ce0" stroke="#1a4c90"/><path d="M1 6h9v6H1z" fill="#a8d0f4" stroke="#1a4c90"/><path d="M3 14h5M12 10h3" stroke="#1a4c90" stroke-width="1.500"/></svg>
    <svg class="h-4 w-4" viewBox="0 0 16 16"><path d="M1 4l6-1 1-2h6v13H1z" fill="#6cb4ec" stroke="#1a5ca8"/><path d="M1 5h14v9H1z" fill="#a0d2f6" stroke="#1a5ca8"/></svg>
    <svg class="h-4 w-4" viewBox="0 0 16 16"><path d="M5 4h10v8H5z" fill="#555" stroke="#222"/><path d="M0 5l4 2v3l-4 2z" fill="#444"/><path d="M6 6h8" stroke="#aaa"/></svg>
    <svg class="h-4 w-4" viewBox="0 0 16 16"><path d="M1 4h14M1 8h14M1 12h14M4 1v14M8 1v14M12 1v14" stroke="#4a5cb4"/><rect x="2.500" y="2.500" width="11" height="11" fill="#dce4fa" stroke="#3548a4" stroke-width="1.300"/><path d="M6 5v4c0 3 4 3 4 0V5" fill="none" stroke="#3548a4" stroke-width="1.500"/></svg>
    <i class="mx-0.5 h-5 w-px bg-[#d0ceca]"></i>
    <svg class="h-4 w-4" viewBox="0 0 16 16"><circle cx="7" cy="8" r="6" fill="#c8e0f4" stroke="#3870a8"/><path d="M3 4l4 4-3 5" stroke="#3870a8" fill="none"/><path d="M8 3l4 4v5l3-1-5 5-3-3 2-1V8z" fill="#4cb42c" stroke="#1c5c10" stroke-width=".8"/></svg>
    <svg class="h-4 w-4" viewBox="0 0 16 16"><rect x="1" y="1" width="14" height="14" rx="1" fill="#f6f6f6" stroke="#888" stroke-width="1.400"/><path d="M6 3h4v4h3l-5 6-5-6h3z" fill="#4cb42c" stroke="#1c5c10"/></svg>
    <span>Ctrl Derecho</span>
  </div>
</footer>
</body>
</html>
